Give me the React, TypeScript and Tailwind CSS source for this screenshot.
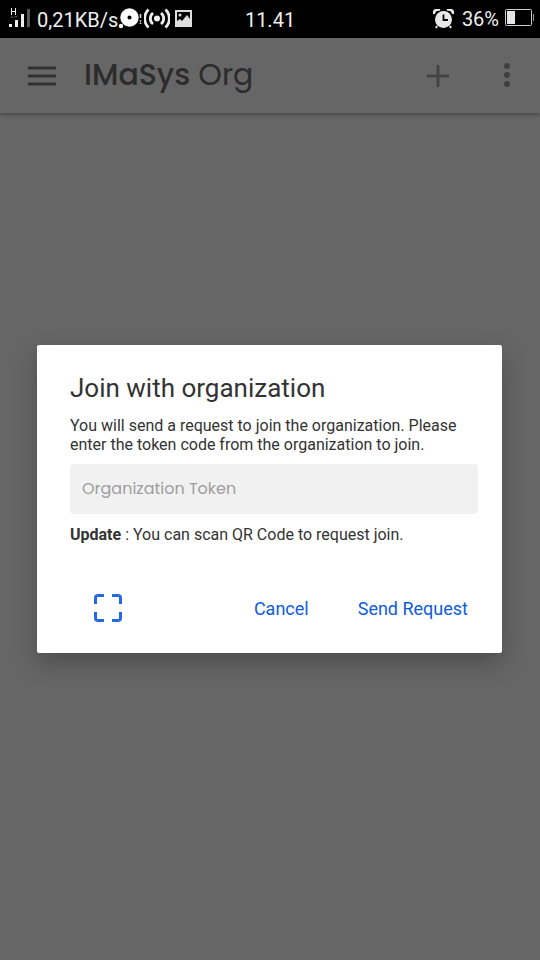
import React from "react";

function StatusBar() {
  return (
    <header className="flex h-[38px] shrink-0 items-center bg-black px-[9px] text-[20px] leading-6 text-[#eeeeee]">
      <div className="flex flex-1 items-center">
        <svg width="22" height="22" viewBox="0 0 22 22" className="mr-[6px]" aria-label="Mobile signal">
          <path d="M2.500 0v7M6.500 0v7M2.500 3.500h4" stroke="#eee" strokeWidth="1" fill="none" />
          <path d="M3 8l2 2H1zM7 10L5 8h4z" fill="#444" />
          <rect x="0" y="16" width="3" height="3" fill="#eee" />
          <rect x="6" y="12" width="3" height="7" fill="#eee" />
          <rect x="12" y="6" width="3" height="13" fill="#eee" />
          <rect x="18" y="1" width="3" height="18" fill="#555" />
        </svg>
        <span className="pt-px">0,21KB/s</span>
        <svg width="26" height="22" viewBox="0 0 26 22" aria-label="Disc">
          <circle cx="11.500" cy="9.500" r="9.200" fill="#fff" />
          <circle cx="11.500" cy="9.500" r="2" fill="#000" />
          <circle cx="3" cy="18" r="2.200" fill="#fff" />
          <path d="M22.500 6v4M22.500 12v1.500M22.500 14.500v1.500" stroke="#ddd" strokeWidth="1.500" />
        </svg>
        <svg width="26" height="22" viewBox="0 0 26 22" aria-label="Hotspot" fill="none" stroke="#eee" strokeWidth="2.800">
          <circle cx="13" cy="10.500" r="3" fill="#eee" stroke="none" />
          <path d="M9 5a7 7 0 0 0 0 11M17 5a7 7 0 0 1 0 11M4.500 1.500a12.500 12.500 0 0 0 0 18M21.500 1.500a12.500 12.500 0 0 1 0 18" />
        </svg>
        <svg width="17" height="18" viewBox="0 0 17 18" className="ml-[5px]" aria-label="Picture">
          <rect x="1" y="1" width="15" height="15" fill="#000" stroke="#ddd" strokeWidth="2" />
          <circle cx="5" cy="5" r="1.500" fill="#ddd" />
          <path d="M2 11l3-2 2 2 5-6 3 4v6H2z" fill="#ddd" />
        </svg>
      </div>
      <time className="pt-px">11.41</time>
      <div className="flex flex-1 items-center justify-end">
        <svg width="21" height="20" viewBox="0 0 21 20" className="mr-2" aria-label="Alarm">
          <path d="M1 5a4 4 0 0 1 6-4M14 1a4 4 0 0 1 6 4" stroke="#eee" strokeWidth="2.500" fill="none" />
          <path d="M4 17l-1 2M17 17l1 2" stroke="#eee" strokeWidth="2" />
          <circle cx="10.500" cy="10.500" r="8.500" fill="#e8e8e8" />
          <path d="M10.500 5.500v5.500h4.500" stroke="#000" strokeWidth="1.800" fill="none" />
        </svg>
        <span>36%</span>
        <svg width="29" height="20" viewBox="0 0 29 20" className="ml-[6px] -mr-[3px]" aria-label="Battery">
          <rect x=".500" y=".500" width="26" height="16" rx="1" fill="none" stroke="#ccc" />
          <rect x="2" y="2" width="8" height="13" fill="#e4e4e4" />
          <path d="M28.500 5v7" stroke="#999" />
        </svg>
      </div>
    </header>
  );
}

function AppBar() {
  return (
    <div className="flex h-[75px] items-center bg-white pr-[30px] pl-7 shadow-[0_2px_4px_rgba(0,0,0,0.3)]">
      <button type="button" aria-label="Menu">
        <svg width="28" height="20" viewBox="0 0 28 20" className="block" stroke="#7c7c7c" strokeWidth="3">
          <path d="M0 2h28M0 10h28M0 18h28" />
        </svg>
      </button>
      <h1 className="ml-7 flex-1 pb-[2px] font-['Poppins','Inter',sans-serif] text-[30px] leading-10 text-[#6e6e6e]">
        <span className="font-medium">IMaSys</span> Org
      </h1>
      <button type="button" aria-label="Add" className="mr-[55px]">
        <svg width="22" height="22" viewBox="0 0 22 22" className="block" stroke="#aaaaaa" strokeWidth="3">
          <path d="M11 0v22M0 11h22" />
        </svg>
      </button>
      <button type="button" aria-label="More options">
        <svg width="6" height="26" viewBox="0 0 6 26" className="block" fill="#9f9f9f">
          <circle cx="3" cy="3" r="3" />
          <circle cx="3" cy="12" r="3" />
          <circle cx="3" cy="21" r="3" />
        </svg>
      </button>
    </div>
  );
}

function JoinDialog() {
  return (
    <form
      role="dialog"
      aria-modal="true"
      aria-labelledby="join-title"
      onSubmit={(event) => event.preventDefault()}
      className="w-full rounded-[2px] bg-white pt-[23px] pr-6 pb-[21px] pl-[33px] text-[16px] leading-[19px] text-[#333333] shadow-[0_10px_24px_rgba(0,0,0,0.25)]"
    >
      <h2 id="join-title" className="text-[26px] leading-10">Join with organization</h2>
      <p className="mt-2">
        You will send a request to join the organization. Please enter the token code from the organization to join.
      </p>
      <input
        aria-label="Organization Token"
        placeholder="Organization Token"
        className="mt-[10px] block h-[50px] w-full rounded-[4px] bg-[#f1f1f1] px-3 pb-[2px] font-['Poppins','Inter',sans-serif] text-[16px] text-[#333333] outline-none placeholder:text-[#9e9e9e]"
      />
      <p className="mt-[11px]">
        <strong className="font-bold">Update</strong> : You can scan QR Code to request join.
      </p>
      <div className="mt-10 flex h-12 items-center pr-[10px] pl-6 text-[18px] leading-6 text-[#0f5ddd]">
        <button type="button" aria-label="Scan QR code">
          <svg width="28" height="28" viewBox="0 0 28 28" className="block" fill="none" stroke="#2369e2" strokeWidth="3">
            <path d="M1.500 10V4q0-2.500 2.500-2.500h6M18 1.500h6q2.500 0 2.500 2.500v6M26.500 18v6q0 2.500-2.500 2.500h-6M10 26.500H4q-2.500 0-2.500-2.500v-6" />
          </svg>
        </button>
        <button type="button" className="ml-auto pt-[2px]">Cancel</button>
        <button type="submit" className="ml-[49px] pt-[2px]">Send Request</button>
      </div>
    </form>
  );
}

export default function App() {
  return (
    <div className="flex min-h-screen flex-col bg-white font-['Roboto',sans-serif]">
      <StatusBar />
      <main className="relative flex-1">
        <AppBar />
        <div className="absolute inset-0 flex items-center bg-black/60 pr-[38px] pl-[37px]">
          <JoinDialog />
        </div>
      </main>
    </div>
  );
}
